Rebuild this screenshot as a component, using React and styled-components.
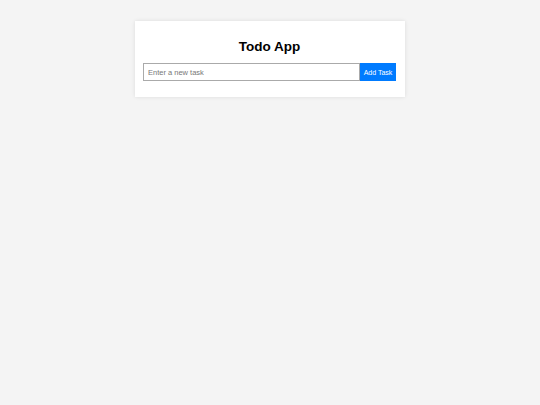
import React, { useState } from "react";
import styled, { createGlobalStyle } from "styled-components";

const Global = createGlobalStyle`
  html, body { margin: 0; padding: 0; }
  body {
    background: #f4f4f4;
    font-family: "Liberation Sans", Arial, sans-serif;
    min-height: 405px;
  }
  * { box-sizing: border-box; }
`;

const Page = styled.div`
  padding-top: 21px;
  display: flex;
  justify-content: center;
`;

const Card = styled.div`
  width: 270px;
  background: #fff;
  padding: 9px 9px 16px 8px;
  box-shadow: 0 0 4px rgba(0, 0, 0, 0.1);
`;

const Title = styled.h1`
  margin: 8px 0 8px;
  font-size: 13.5px;
  line-height: 17px;
  font-weight: 700;
  text-align: center;
  color: #000;
`;

const Form = styled.form`
  display: flex;
  height: 18px;
`;

const Input = styled.input`
  flex: 1;
  min-width: 0;
  height: 18px;
  border: 1px solid #aaa;
  padding: 0 4px;
  font-family: inherit;
  font-size: 7.5px;
  outline: none;
  &::placeholder { color: #777; }
`;

const Button = styled.button`
  width: 36px;
  height: 18px;
  border: none;
  background: #007bff;
  color: #fff;
  font-family: inherit;
  font-size: 7px;
  padding: 0;
  cursor: pointer;
`;

export default function App() {
  const [text, setText] = useState("");
  return (
    <>
      <Global />
      <Page>
        <Card>
          <Title>Todo App</Title>
          <Form onSubmit={(e) => { e.preventDefault(); setText(""); }}>
            <Input
              placeholder="Enter a new task"
              value={text}
              onChange={(e) => setText(e.target.value)}
            />
            <Button type="submit">Add Task</Button>
          </Form>
        </Card>
      </Page>
    </>
  );
}
